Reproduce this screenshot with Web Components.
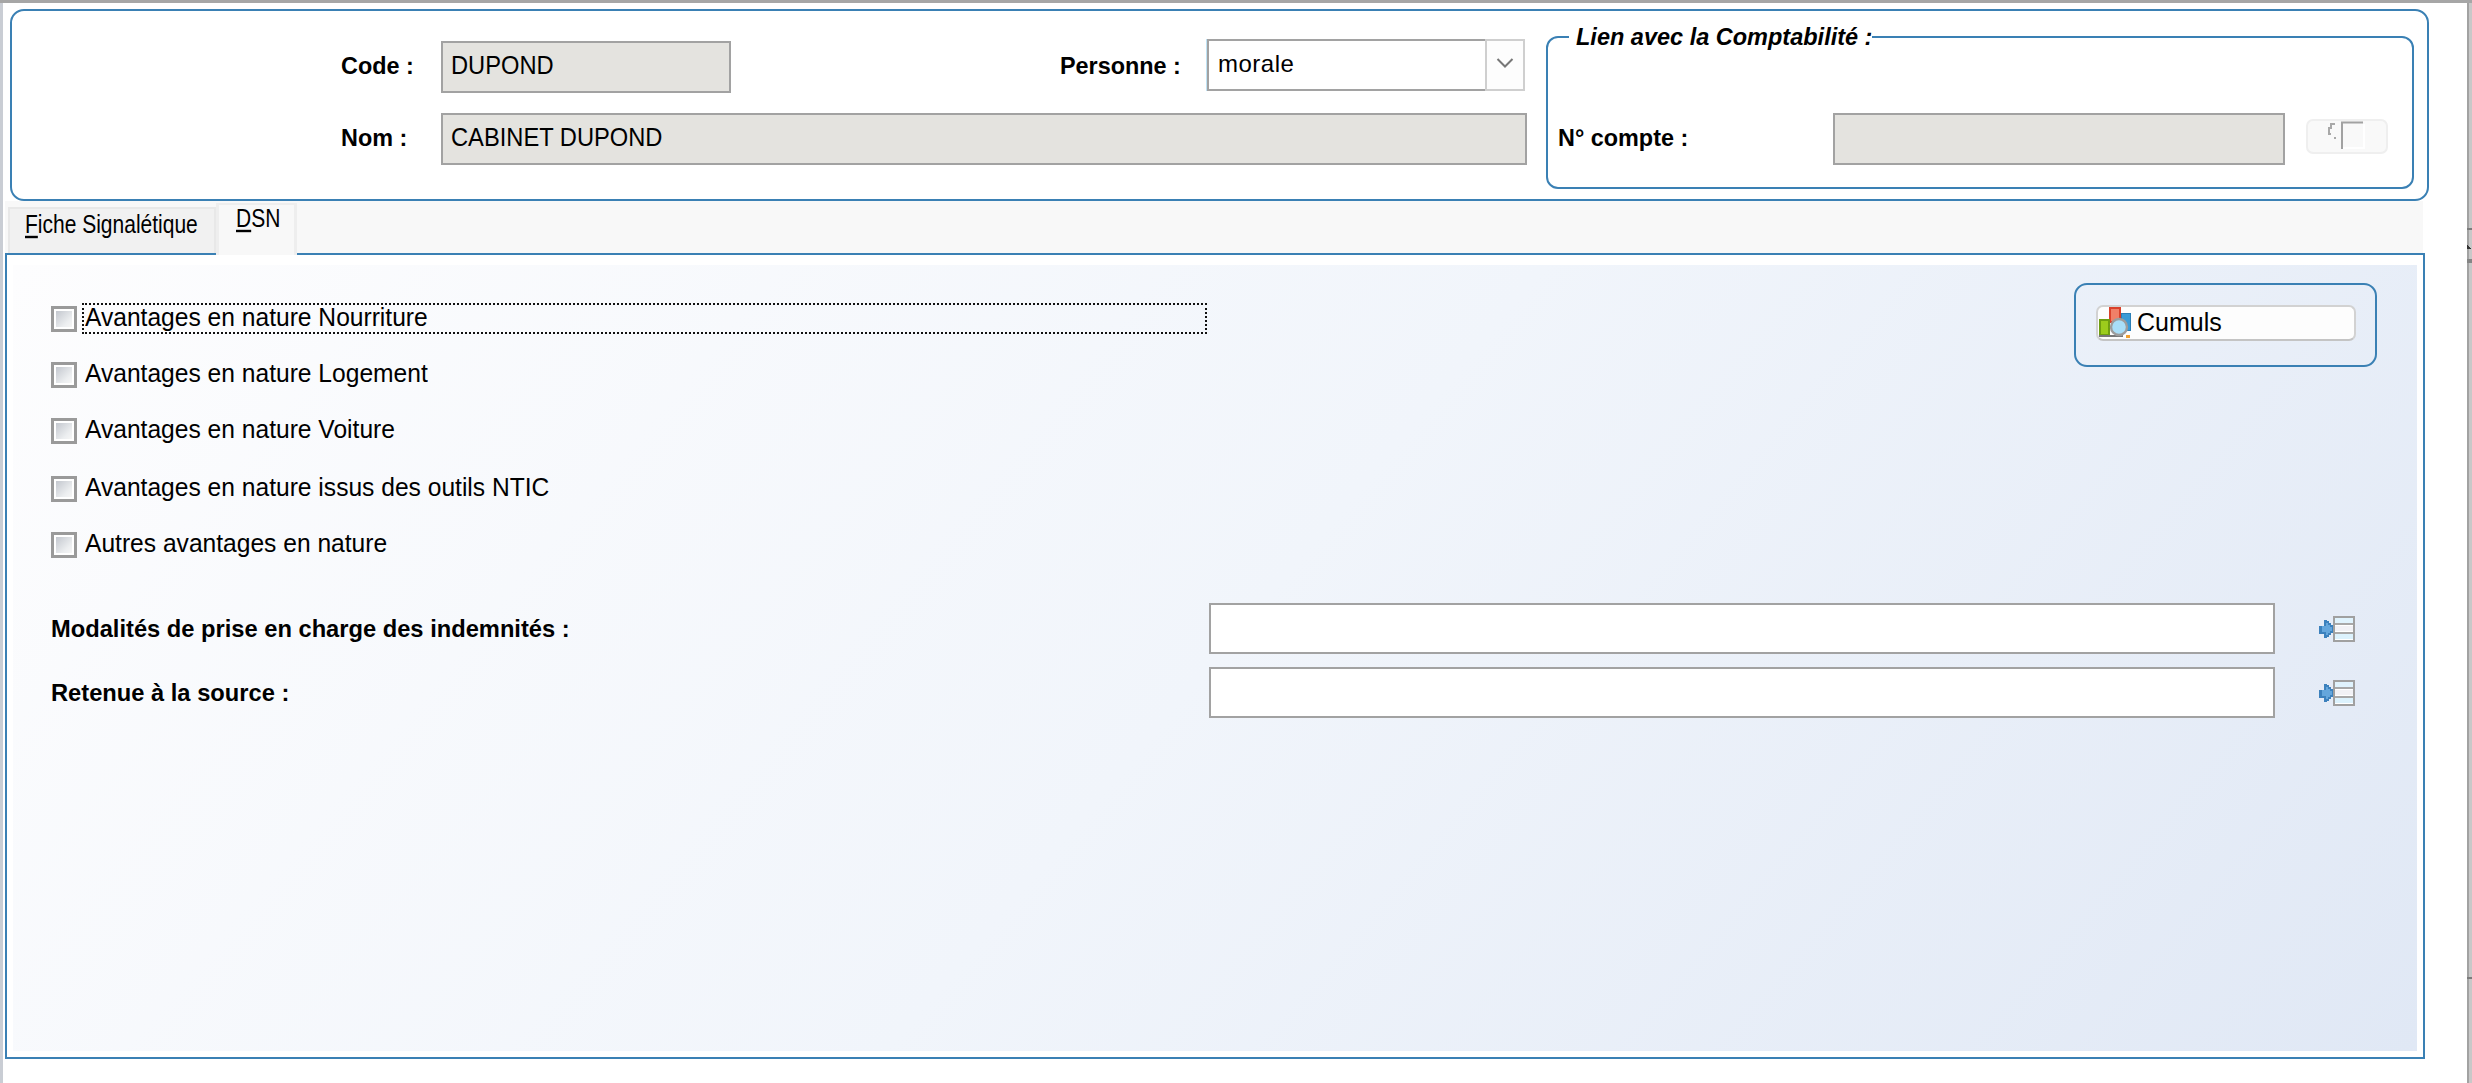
<!DOCTYPE html>
<html lang="fr">
<head>
<meta charset="utf-8">
<title>Fiche</title>
<style>
    html, body { margin: 0; padding: 0; background: #fff; }
    body {
        width: 2472px;
        height: 1083px;
        overflow: hidden;
        font-family: "Liberation Sans", Arial, sans-serif;
        font-size: 23.7px;
        color: #000;
    }
</style>
</head>
<body>
<app-window>
    <fiche-header></fiche-header>
    <tab-strip>
        <tab-item><u>F</u>iche Signalétique</tab-item>
        <tab-item active><u>D</u>SN</tab-item>
    </tab-strip>
    <tab-pane>
        <div slot="checks">
            <check-row focused>Avantages en nature Nourriture</check-row>
            <check-row>Avantages en nature Logement</check-row>
            <check-row>Avantages en nature Voiture</check-row>
            <check-row style="margin-top:2px">Avantages en nature issus des outils NTIC</check-row>
            <check-row>Autres avantages en nature</check-row>
        </div>
        <cumuls-box slot="side"></cumuls-box>
        <lookup-row slot="lookups">Modalités de prise en charge des indemnités :</lookup-row>
        <lookup-row slot="lookups">Retenue à la source :</lookup-row>
    </tab-pane>
</app-window>

<script>
// small helper, every component gets its shadow from a string
function shadow(el, html) {
    var tpl = document.createElement('template');
    tpl.innerHTML = html;
    el.attachShadow({ mode: 'open' }).appendChild(tpl.content.cloneNode(true));
}

// the reference text is a little taller than Arial at the same width
customElements.define('x-text', class extends HTMLElement {
    constructor() {
        super();
        shadow(this, `
<style>
    :host {
        display: inline-block;
        white-space: nowrap;
        line-height: 26px;
        transform: scaleY(var(--sy, 1.05));
    }
</style>
<slot></slot>`);
    }
});

customElements.define('app-window', class extends HTMLElement {
    constructor() {
        super();
        shadow(this, `
<style>
    :host { display: flex; width: 2472px; height: 1083px; box-sizing: border-box; border-top: 3px solid #a6a6a6; }
    .left { width: 3px; background: #c9cdd4; }
    .main { flex: 1; padding: 6px 0 0 2px; }
    .rail {
        width: 5px;
        background: linear-gradient(to right, #a2a2a2 0 2px, #c8c8c8 2px);
        display: flex;
        flex-direction: column;
    }
    .mark1 { height: 2px; margin-top: 225px; background: #7c7c7c; }
    .mark2 { width: 4px; height: 5px; margin-top: 14px; background: linear-gradient(to top right, #333 50%, transparent 50%); }
    .mark3 { height: 4px; margin-top: 10px; background: #858585; }
    .mark4 { height: 2px; margin-top: 714px; background: #7c7c7c; }
</style>
<div class="left"></div>
<div class="main"><slot></slot></div>
<div class="rail"><i class="mark1"></i><i class="mark2"></i><i class="mark3"></i><i class="mark4"></i></div>`);
    }
});

customElements.define('text-field', class extends HTMLElement {
    constructor() {
        super();
        shadow(this, `
<style>
    :host {
        display: flex;
        align-items: center;
        box-sizing: border-box;
        height: 52px;
        padding: 0 0 2px 8px;
        border: 2px solid #a2a2a2;
        background: #e4e3df;
        font-weight: normal;
    }
    :host([plain]) { background: #fff; }
</style>
<x-text><slot></slot></x-text>`);
    }
});

customElements.define('combo-box', class extends HTMLElement {
    constructor() {
        super();
        shadow(this, `
<style>
    :host { display: flex; height: 56px; box-sizing: border-box; width: 318px; padding-top: 2px; padding-bottom: 2px; }
    .edit {
        flex: 1;
        display: flex;
        align-items: center;
        box-sizing: border-box;
        padding: 0 0 2px 9px;
        border: 2px solid #a2a2a2;
        border-right: 0;
        box-shadow: -1px 0 0 #bfe3f5;
        background: #fff;
        font-size: 24px;
        letter-spacing: .5px;
        --sy: 1;
    }
    .btn {
        width: 40px;
        box-sizing: border-box;
        display: flex;
        align-items: center;
        justify-content: center;
        border: 2px solid #cfcfcf;
        background: #fdfdfd;
    }
    svg { display: block; margin-bottom: 4px; }
</style>
<div class="edit"><x-text><slot></slot></x-text></div>
<div class="btn">
    <svg width="18" height="12" viewBox="0 0 18 12"><path d="M1.5 2 L9 9.5 L16.5 2" fill="none" stroke="#777" stroke-width="2"/></svg>
</div>`);
    }
});

customElements.define('group-box', class extends HTMLElement {
    constructor() {
        super();
        shadow(this, `
<style>
    :host { display: block; }
    fieldset {
        margin: 0;
        box-sizing: border-box;
        height: 100%;
        padding: 0;
        border: 2px solid #3a80b4;
        border-radius: 12px;
    }
    legend {
        margin-left: 21px;
        padding: 0 0 0 7px;
        line-height: 28px;
        font-size: 23.5px;
        font-weight: bold;
        font-style: italic;
    }
</style>
<fieldset>
    <legend><x-text><slot name="title"></slot></x-text></legend>
    <slot></slot>
</fieldset>`);
    }
});

customElements.define('fiche-header', class extends HTMLElement {
    constructor() {
        super();
        shadow(this, `
<style>
    :host {
        display: flex;
        box-sizing: border-box;
        width: 2419px;
        height: 192px;
        margin-left: 5px;
        border: 2px solid #3a80b4;
        border-radius: 14px;
        background: #fff;
    }
    .form {
        width: 1514px;
        box-sizing: border-box;
        padding: 30px 0 0 329px;
        display: grid;
        grid-template-columns: 100px 290px 329px 147px 318px;
        grid-template-rows: 52px 52px;
        row-gap: 20px;
        align-items: center;
    }
    .wide { grid-column: 2 / 6; margin-right: -2px; }
    .lab { font-weight: bold; font-size: 23.4px; margin-top: -2px; justify-self: start; }
    .combo { align-self: start; margin-top: -4px; }
    group-box { width: 868px; height: 166px; margin: 12px 0 0 20px; }
    .link { display: flex; align-items: flex-start; padding: 62px 0 0 10px; }
    .link .lab { width: 275px; margin-top: 0; padding-top: 11px; }
    .link text-field { width: 452px; }
    .ghost { margin: 6px 0 0 21px; }
</style>
<div class="form">
    <x-text class="lab">Code :</x-text>
    <text-field>DUPOND</text-field>
    <span></span>
    <x-text class="lab">Personne :</x-text>
    <combo-box class="combo">morale</combo-box>
    <x-text class="lab">Nom :</x-text>
    <text-field class="wide">CABINET DUPOND</text-field>
</div>
<group-box>
    <span slot="title">Lien avec la Comptabilité :</span>
    <div class="link">
        <x-text class="lab">N° compte :</x-text>
        <text-field></text-field>
        <ghost-button class="ghost"></ghost-button>
    </div>
</group-box>`);
    }
});

customElements.define('ghost-button', class extends HTMLElement {
    constructor() {
        super();
        shadow(this, `
<style>
    :host {
        display: flex;
        box-sizing: border-box;
        width: 82px;
        height: 35px;
        border: 2px solid #efefef;
        border-radius: 7px;
        background: #f9f9f9;
        padding: 0 0 0 19px;
    }
    svg { display: block; }
</style>
<svg width="40" height="30" viewBox="0 0 40 30">
    <path d="M8 3 H4 V7 H2 V13 H4 M7 17 H9" fill="none" stroke="#a8a8a8" stroke-width="2"/>
    <path d="M15 28 V1.5 H36" fill="none" stroke="#a2a2a2" stroke-width="2"/>
    <path d="M37 3 V27 H16" fill="none" stroke="#fff" stroke-width="2"/>
</svg>`);
    }
});

customElements.define('tab-strip', class extends HTMLElement {
    constructor() {
        super();
        shadow(this, `
<style>
    :host {
        display: flex;
        align-items: flex-end;
        box-sizing: border-box;
        width: 2418px;
        height: 52px;
        padding-left: 3px;
        background: #f8f8f8;
        font-size: 21px;
        --sy: 1.2;
    }
</style>
<slot></slot>`);
    }
});

customElements.define('tab-item', class extends HTMLElement {
    constructor() {
        super();
        shadow(this, `
<style>
    :host {
        display: block;
        box-sizing: border-box;
        width: 208px;
        height: 46px;
        padding: 3px 0 0 15px;
        border: 2px solid #e8e8e8;
        border-bottom: 0;
        background: #f1f1f1;
    }
    :host([active]) {
        width: 81px;
        height: 52px;
        margin-bottom: -2px;
        padding: 1px 0 0 17px;
        border-color: #eeeeee;
        border-width: 2px 3px 0;
        background: #f8f8f8;
        position: relative;
        z-index: 1;
    }
</style>
<x-text><slot></slot></x-text>`);
    }
});

customElements.define('tab-pane', class extends HTMLElement {
    constructor() {
        super();
        shadow(this, `
<style>
    :host {
        display: block;
        box-sizing: border-box;
        width: 2420px;
        height: 806px;
        padding: 10px 6px 6px 6px;
        border: 2px solid #3a80b4;
        background: #fff;
    }
    .panel {
        box-sizing: border-box;
        height: 100%;
        padding: 38px 40px 0 38px;
        background: linear-gradient(130deg, #fdfdfe 0%, #f1f5fb 50%, #e0e8f5 100%);
    }
    .top { display: flex; justify-content: space-between; align-items: flex-start; height: 300px; }
    .side { margin-top: -20px; }
    .bottom { display: grid; row-gap: 13px; }
    ::slotted([slot="checks"]) { display: grid; row-gap: 25px; justify-items: start; }
</style>
<div class="panel">
    <div class="top">
        <slot name="checks"></slot>
        <div class="side"><slot name="side"></slot></div>
    </div>
    <div class="bottom"><slot name="lookups"></slot></div>
</div>`);
    }
});

customElements.define('check-row', class extends HTMLElement {
    constructor() {
        super();
        shadow(this, `
<style>
    :host { display: flex; align-items: center; height: 31px; }
    .box {
        width: 26px;
        height: 26px;
        box-sizing: border-box;
        flex: none;
        border: 3px solid #9a9a9a;
        padding: 2px;
        background: #fff;
    }
    .box i { display: block; height: 100%; background: linear-gradient(135deg, #c3c7ce, #eceef0 70%, #f6f6f6); }
    .label {
        box-sizing: border-box;
        height: 31px;
        margin-left: 5px;
        padding: 0 0 2px 1px;
        border: 2px solid transparent;
        display: flex;
        align-items: center;
        font-size: 24.6px;
        --sy: 1.03;
    }
    :host([focused]) .label { width: 1125px; border: 2px dotted #111; }
</style>
<div class="box"><i></i></div>
<div class="label"><x-text><slot></slot></x-text></div>`);
    }
});

customElements.define('lookup-row', class extends HTMLElement {
    constructor() {
        super();
        shadow(this, `
<style>
    :host {
        display: grid;
        grid-template-columns: 1158px 1066px auto;
        align-items: center;
        height: 51px;
    }
    .lab { justify-self: start; font-weight: bold; font-size: 23.7px; --sy: 1; }
    text-field { height: 51px; }
    list-icon { margin-left: 44px; }
</style>
<x-text class="lab"><slot></slot></x-text>
<text-field plain></text-field>
<list-icon></list-icon>`);
    }
});

customElements.define('list-icon', class extends HTMLElement {
    constructor() {
        super();
        shadow(this, `
<style>
    :host { display: block; width: 36px; height: 26px; }
    svg { display: block; }
</style>
<svg width="36" height="26" viewBox="0 0 36 26" shape-rendering="crispEdges">
    <path d="M5 4h3v1h2v2h2v2h2v2h0v4h0v2h-2v2h-2v2h-2v1h-3v-4h-5v-8h5z" fill="#3c81bd"/>
    <path d="M7 7h2v2h2v2h2v4h-2v2h-2v2h-2v-3h-4v-6h4z" fill="#64a6dc"/>
    <rect x="15" y="1" width="20" height="24" fill="#fff" stroke="#a0a0a0" stroke-width="2"/>
    <rect x="16" y="2" width="18" height="5" fill="#e0f3fd"/>
    <rect x="16" y="10" width="18" height="5" fill="#f2f2f6"/>
    <rect x="16" y="18" width="18" height="5" fill="#dcf2fd"/>
    <rect x="16" y="7" width="18" height="2" fill="#a8a8a8"/>
    <rect x="16" y="16" width="18" height="2" fill="#a8a8a8"/>
</svg>`);
    }
});

customElements.define('cumuls-box', class extends HTMLElement {
    constructor() {
        super();
        shadow(this, `
<style>
    :host {
        display: block;
        box-sizing: border-box;
        width: 303px;
        height: 84px;
        padding: 20px;
        border: 2px solid #3a80b4;
        border-radius: 13px;
    }
    .btn {
        display: flex;
        align-items: center;
        box-sizing: border-box;
        width: 260px;
        height: 36px;
        padding: 0 0 2px 1px;
        border: 2px solid #d2d2d2;
        border-bottom-color: #c4c4c4;
        border-radius: 7px;
        background: #fdfdfd;
        font-size: 25px;
    }
    svg { display: block; flex: none; align-self: flex-start; }
    x-text { margin-left: 5px; }
</style>
<div class="btn">
    <svg width="33" height="32" viewBox="0 0 33 32">
        <rect x="22.5" y="6.5" width="9" height="17" fill="#3b9bd6" stroke="#2c7fb6"/>
        <rect x="11" y="1" width="10" height="14" fill="#f08068" stroke="#d9402a" stroke-width="2"/>
        <rect x="1" y="13" width="9" height="15" fill="#9ccc1c" stroke="#6f9e10" stroke-width="2"/>
        <rect x="0" y="28" width="24" height="2" fill="#777"/>
        <rect x="27" y="28" width="4" height="3" fill="#f0a030"/>
        <circle cx="20" cy="20" r="8" fill="#a8def8" stroke="#9c9c9c" stroke-width="2.4"/>
    </svg>
    <x-text>Cumuls</x-text>
</div>`);
    }
});
</script>
</body>
</html>
